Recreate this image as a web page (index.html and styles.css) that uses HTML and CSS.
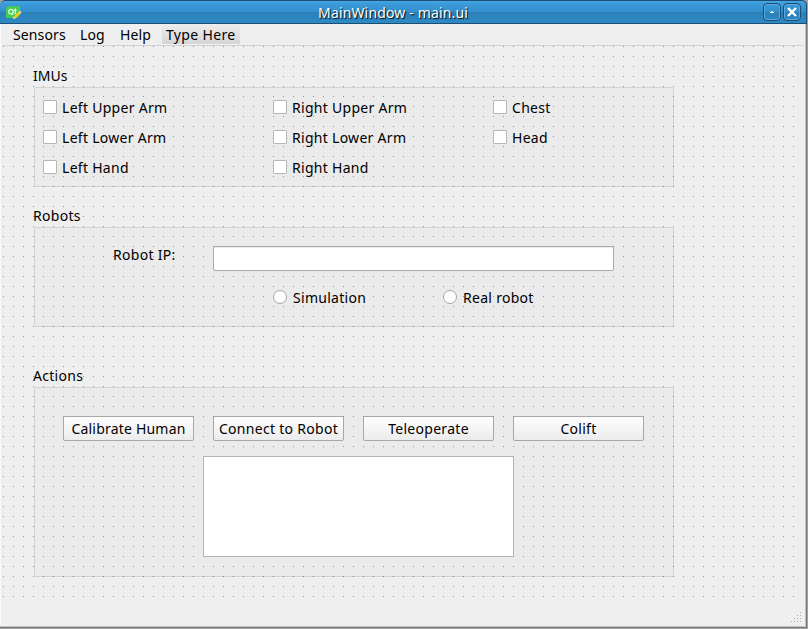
FILE: index.html
```html
<!DOCTYPE html>
<html lang="en">
<head>
<meta charset="utf-8">
<title>MainWindow - main.ui</title>
<link rel="stylesheet" href="styles.css">
</head>
<body>
<div class="window">
  <header class="titlebar">
    <svg class="app-icon" width="16" height="14" viewBox="0 0 16 14">
      <path d="M2 0H14V9L11 12H0V2Z" fill="#41cd52"/>
      <circle cx="5" cy="5.7" r="2.3" fill="none" stroke="#e9ffe9" stroke-width="1.1"/>
      <path d="M5.5 7L7 9M9.3 2.5V7.2Q9.3 8 10.5 8M8 4.4H10.6" fill="none" stroke="#e9ffe9" stroke-width="1.1"/>
      <path d="M7.2 12.8L8 10.3L13.3 5L15.2 6.9L9.8 12.2Z" fill="#f4c91c"/>
      <path d="M12.6 5.7L13.8 4.4L15.7 6.3L14.5 7.6Z" fill="#ddd3cc"/>
      <path d="M7 13L7.8 10.6L9.5 12.3Z" fill="#eee4c0"/>
    </svg>
    <h1 class="title">MainWindow - main.ui</h1>
    <div class="controls">
      <span class="control"><svg width="16" height="16"><path d="M6 8.5H10" stroke="#fff" stroke-width="1"/><path d="M7 7.5H9" stroke="#b9ddf4"/></svg></span>
      <span class="control"><svg width="16" height="16"><path d="M4.8 4.8L11.2 11.2M11.2 4.8L4.8 11.2" stroke="#fff" stroke-width="2.3" stroke-linecap="square"/></svg></span>
    </div>
  </header>
  <nav class="menubar">
    <span class="menu sensors">Sensors</span>
    <span class="menu log">Log</span>
    <span class="menu help">Help</span>
    <span class="menu type-here">Type Here</span>
  </nav>
  <main class="canvas">
    <h2 class="caption imus-caption">IMUs</h2>
    <section class="frame imus">
      <label class="option"><i class="check"></i><span class="option-text">Left Upper Arm</span></label>
      <label class="option"><i class="check"></i><span class="option-text">Right Upper Arm</span></label>
      <label class="option"><i class="check"></i><span class="option-text">Chest</span></label>
      <label class="option"><i class="check"></i><span class="option-text">Left Lower Arm</span></label>
      <label class="option"><i class="check"></i><span class="option-text">Right Lower Arm</span></label>
      <label class="option"><i class="check"></i><span class="option-text">Head</span></label>
      <label class="option"><i class="check"></i><span class="option-text">Left Hand</span></label>
      <label class="option"><i class="check"></i><span class="option-text">Right Hand</span></label>
    </section>
    <h2 class="caption">Robots</h2>
    <section class="frame robots">
      <div class="field"><span class="field-label">Robot IP:</span><div class="line-edit"></div></div>
      <div class="radios">
        <label class="option"><i class="check radio"></i><span class="option-text">Simulation</span></label>
        <label class="option"><i class="check radio"></i><span class="option-text">Real robot</span></label>
      </div>
    </section>
    <h2 class="caption actions-caption">Actions</h2>
    <section class="frame actions">
      <div class="buttons">
        <div class="button calibrate">Calibrate Human</div>
        <div class="button">Connect to Robot</div>
        <div class="button">Teleoperate</div>
        <div class="button">Colift</div>
      </div>
      <div class="text-edit"></div>
    </section>
  </main>
  <footer class="statusbar">
    <svg width="10" height="10" fill="#b0b0b0"><path d="M9 0h1v1h-1zM6 3h1v1h-1zM9 3h1v1h-1zM3 6h1v1h-1zM6 6h1v1h-1zM9 6h1v1h-1zM0 9h1v1h-1zM3 9h1v1h-1zM6 9h1v1h-1zM9 9h1v1h-1z"/></svg>
  </footer>
</div>
</body>
</html>
```
FILE: styles.css
```css
* { box-sizing: border-box; }
body {
  margin: 0;
  width: 808px;
  height: 629px;
  overflow: hidden;
  background: #a2a2a2;
  font: 14px/20px "Noto Sans", "Open Sans", sans-serif;
  letter-spacing: .29px;
  color: #000;
}
h1, h2 { margin: 0; font: inherit; }
.window {
  display: flex;
  flex-direction: column;
  width: 807px;
  height: 628px;
  border-right: 1px solid #777;
  border-bottom: 1px solid #777;
  border-radius: 5px 5px 0 0;
  background: #efefef;
  box-shadow: inset -1px -1px #c4c4c4, inset 1px 0 #fafafa;
}
.titlebar {
  display: flex;
  align-items: center;
  flex: none;
  height: 24px;
  margin-right: -1px;
  padding: 0 5px 0 6px;
  border: solid #1c4e73;
  border-width: 1px 1px 1px 0;
  border-radius: 5px 5px 0 0;
  background: linear-gradient(#45a7e4, #3b9ad9 3px, #348fcb 50%, #2b80b9 52%, #2f89c5);
}
.app-icon { margin-top: 1px; }
.title {
  flex: 1;
  padding-left: 1px;
  padding-top: 1px;
  text-align: center;
  letter-spacing: .15px;
  color: #fff;
  text-shadow: 1px 1px 1px #000;
}
.controls { display: flex; gap: 2px; }
.control {
  width: 18px;
  height: 18px;
  border: 1px solid #1c4e73;
  border-radius: 4px;
  box-shadow: inset 0 0 0 1px #5aa9dc;
}
.control svg { display: block; }
.menubar {
  display: flex;
  flex: none;
  height: 22px;
  margin: 0 3px;
  padding: 1px 0 0 10px;
  border-bottom: 1px solid #d4d4d4;
  letter-spacing: .12px;
}
.sensors { width: 67px; }
.log { width: 40px; }
.help { width: 42px; }
.type-here {
  height: 19px;
  width: 78px;
  padding-left: 4px;
  background: linear-gradient(#ececec, #d6d6d6);
  letter-spacing: .35px;
}
.canvas {
  flex: none;
  height: 551px;
  width: 791px;
  margin: 0 3px;
  padding: 21px 0 0 31px;
  background: conic-gradient(from 0deg at 1px 1px, transparent 75%, #969696 0) 0 0 / 10px 10px;
}
.caption { height: 20px; line-height: 18px; margin-left: -1px; }
.imus-caption { letter-spacing: 0; }
.frame + .caption { margin-top: 20px; }
.frame + .actions-caption { margin-top: 40px; }
.frame {
  width: 640px;
  height: 100px;
  border: 1px solid rgba(0, 0, 0, .11);
  border-radius: 2px;
  background: rgba(0, 0, 0, .015);
}
.imus {
  display: grid;
  grid-template-columns: 230px 220px 1fr;
  grid-auto-rows: 30px;
  padding: 4px 0 0 8px;
}
.option { display: flex; align-items: center; gap: 5px; }
.option-text { padding-top: 2px; }
.check {
  width: 14px;
  height: 14px;
  border: 1px solid #b6b6b6;
  border-radius: 1px;
  background: #fff;
}
.radio { border-radius: 50%; border-color: #a6a6a6; margin-right: 1px; }
.robots { padding: 18px 0 0 78px; }
.field { display: flex; }
.field-label { width: 100px; line-height: 18px; }
.line-edit {
  width: 401px;
  height: 25px;
  border: 1px solid #aaa;
  border-radius: 2px;
  background: #fff;
  box-shadow: inset 0 1px #ececec;
}
.radios {
  display: grid;
  grid-template-columns: 170px 1fr;
  padding: 15px 0 0 160px;
}
.actions { height: 190px; padding: 28px 0 0 28px; }
.buttons { display: flex; gap: 19px; }
.button {
  width: 131px;
  height: 25px;
  border: 1px solid #a8a8a8;
  border-radius: 2px;
  background: linear-gradient(#fefefe, #ececec);
  text-align: center;
  line-height: 24px;
}
.calibrate { letter-spacing: .2px; }
.text-edit {
  width: 311px;
  height: 101px;
  margin: 15px 0 0 140px;
  border: 1px solid #b4b4b4;
  background: #fff;
}
.statusbar {
  flex: 1;
  display: flex;
  justify-content: flex-end;
  align-items: flex-end;
  padding: 0 5px 5px 0;
}
```
